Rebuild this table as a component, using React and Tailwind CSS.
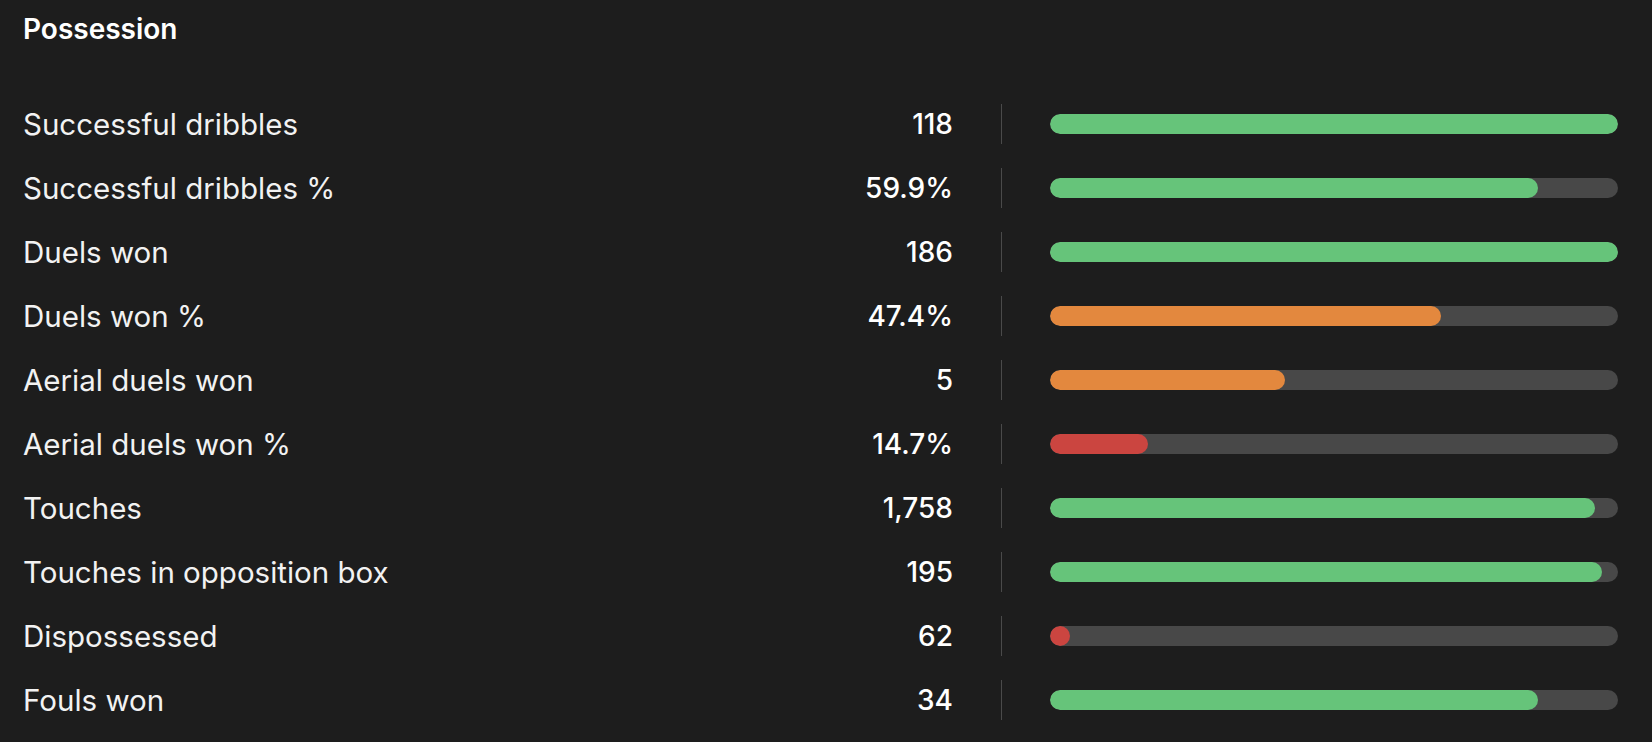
import React from 'react';

const stats = [
  { label: 'Successful dribbles', value: '118', pct: 100, color: 'green' },
  { label: 'Successful dribbles %', value: '59.9%', pct: 86, color: 'green' },
  { label: 'Duels won', value: '186', pct: 100, color: 'green' },
  { label: 'Duels won %', value: '47.4%', pct: 68.8, color: 'orange' },
  { label: 'Aerial duels won', value: '5', pct: 41.4, color: 'orange' },
  { label: 'Aerial duels won %', value: '14.7%', pct: 17.3, color: 'red' },
  { label: 'Touches', value: '1,758', pct: 96, color: 'green' },
  { label: 'Touches in opposition box', value: '195', pct: 97.2, color: 'green' },
  { label: 'Dispossessed', value: '62', pct: 3.5, color: 'red' },
  { label: 'Fouls won', value: '34', pct: 86, color: 'green' },
];

const fillClass = {
  green: 'bg-[#66c47a]',
  orange: 'bg-[#e3883e]',
  red: 'bg-[#cb4540]',
};

const StatRow = ({ stat }) => (
  <div className="flex items-center h-16">
    <span className="flex-1 text-[29.5px] text-[#f2f2f2]">{stat.label}</span>
    <span className="text-[28px] font-medium text-white text-right">{stat.value}</span>
    <div className="w-px h-10 bg-[#4a4a4a] ml-[48px]" />
    <div className="ml-[48px] w-[568px] h-5 rounded-full bg-[#484848] overflow-hidden">
      <div
        className={`h-full rounded-full min-w-5 ${fillClass[stat.color]}`}
        style={{ width: `${stat.pct}%` }}
      />
    </div>
  </div>
);

export default function App() {
  return (
    <div className="w-[1652px] h-[742px] bg-[#1d1d1d] pl-[23px] pr-[34px] font-['Inter',sans-serif]">
      <h2 className="pt-[8px] h-[92px] text-[28px] font-semibold text-white">Possession</h2>
      <div className="flex flex-col">
        {stats.map(s => (
          <StatRow key={s.label} stat={s} />
        ))}
      </div>
    </div>
  );
}
